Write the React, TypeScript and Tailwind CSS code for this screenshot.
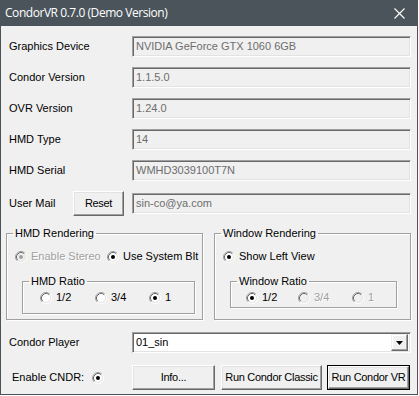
const ui = "font-['Liberation_Sans',Arial,sans-serif] text-[11px] leading-[13px] text-black";
const etched = "border border-[#a0a0a0] shadow-[1px_1px_0_#fff,inset_1px_1px_0_#fff]";

function Radio({ checked, disabled }: { checked?: boolean; disabled?: boolean }) {
  return (
    <svg width="12" height="12" viewBox="0 0 12 12" className="shrink-0">
      <circle cx="6" cy="6" r="4.5" fill={disabled ? "#f0f0f0" : "#ffffff"} />
      <path d="M2.11 9.89 A5.5 5.5 0 0 1 9.89 2.11" fill="none" stroke="#a0a0a0" />
      <path d="M9.89 2.11 A5.5 5.5 0 0 1 2.11 9.89" fill="none" stroke="#ffffff" />
      <path d="M2.82 9.18 A4.5 4.5 0 0 1 9.18 2.82" fill="none" stroke="#696969" />
      <path d="M9.18 2.82 A4.5 4.5 0 0 1 2.82 9.18" fill="none" stroke="#e3e3e3" />
      {checked && <circle cx="6" cy="6" r="2" fill={disabled ? "#a0a0a0" : "#000000"} />}
    </svg>
  );
}

function Option({ label, checked, disabled, className = "" }: { label: string; checked?: boolean; disabled?: boolean; className?: string }) {
  return (
    <div className={`flex items-center gap-[4px] ${className}`}>
      <Radio checked={checked} disabled={disabled} />
      <span className={disabled ? "text-[#a0a0a0] [text-shadow:1px_1px_0_#fff]" : ""}>{label}</span>
    </div>
  );
}

function Field({ value }: { value: string }) {
  return (
    <div className="flex-1 h-[21px] flex items-center px-[3px] bg-[#f0f0f0] text-[#6d6d6d] border border-t-[#a0a0a0] border-l-[#a0a0a0] border-r-white border-b-white shadow-[inset_1px_1px_0_#696969,inset_-1px_-1px_0_#e3e3e3]">
      {value}
    </div>
  );
}

function Button({ label, w, isDefault }: { label: string; w: string; isDefault?: boolean }) {
  const face =
    "h-full w-full flex items-center justify-center whitespace-nowrap tracking-[-0.3px] bg-[#f0f0f0] border border-t-white border-l-white border-r-[#696969] border-b-[#696969] shadow-[inset_-1px_-1px_0_#a0a0a0,inset_1px_1px_0_#e3e3e3]";
  return (
    <div className={`${w} h-[25px] shrink-0 ${isDefault ? "border border-black" : ""}`}>
      <div className={face}>{label}</div>
    </div>
  );
}

function Row({ label, value }: { label: string; value: string }) {
  return (
    <div className="flex items-center mb-[10px]">
      <div className="w-[124px] pl-[1px]">{label}</div>
      <Field value={value} />
    </div>
  );
}

export default function App() {
  return (
    <div className="w-[419px] h-[396px] bg-white">
      <div className={`w-[418px] h-[395px] flex flex-col bg-[#f0f0f0] border-x border-b border-[#4a545a] ${ui}`}>
        <div className="h-[26px] shrink-0 -mx-px bg-[#4a545a] flex items-center justify-between pl-[5px] pr-[13px]">
          <span className="font-['Open_Sans',sans-serif] text-[12px] leading-[16px] text-white tracking-[-0.45px]">
            CondorVR 0.7.0 (Demo Version)
          </span>
          <svg width="11" height="11" viewBox="0 0 11 11">
            <path d="M0.5 0.5 L10.5 10.5 M10.5 0.5 L0.5 10.5" stroke="#ffffff" strokeWidth="1.1" />
          </svg>
        </div>

        <div className="pl-[7px] pr-[6px] pt-[10px]">
          <Row label="Graphics Device" value="NVIDIA GeForce GTX 1060 6GB" />
          <Row label="Condor Version" value="1.1.5.0" />
          <Row label="OVR Version" value="1.24.0" />
          <Row label="HMD Type" value="14" />
          <Row label="HMD Serial" value="WMHD3039100T7N" />

          <div className="flex items-center mt-[1px]">
            <div className="w-[65px] pl-[1px]">User Mail</div>
            <Button label="Reset" w="w-[51px]" />
            <div className="w-[8px]" />
            <Field value="sin-co@ya.com" />
          </div>

          <div className="flex gap-[11px] mt-[11px] -ml-[2px]">
            <fieldset className={`w-[197px] h-[93px] ${etched}`}>
              <legend className="ml-[6px] px-[2px]">HMD Rendering</legend>
              <div className="pl-[8px]">
                <div className="flex items-center mt-[10px]">
                  <Option label="Enable Stereo" checked disabled className="w-[92px]" />
                  <Option label="Use System Blt" checked />
                </div>
                <fieldset className={`mt-[12px] ml-[7px] w-[173px] h-[39px] ${etched}`}>
                  <legend className="ml-[6px] px-[2px]">HMD Ratio</legend>
                  <div className="flex items-center mt-[3px] pl-[17px]">
                    <Option label="1/2" className="w-[55px]" />
                    <Option label="3/4" className="w-[54px]" />
                    <Option label="1" checked />
                  </div>
                </fieldset>
              </div>
            </fieldset>

            <fieldset className={`w-[197px] h-[93px] ${etched}`}>
              <legend className="ml-[6px] px-[2px]">Window Rendering</legend>
              <div className="pl-[8px]">
                <div className="flex items-center mt-[10px]">
                  <Option label="Show Left View" checked />
                </div>
                <fieldset className={`mt-[12px] ml-[7px] w-[167px] h-[33px] ${etched}`}>
                  <legend className="ml-[6px] px-[2px]">Window Ratio</legend>
                  <div className="flex items-center mt-[3px] pl-[15px]">
                    <Option label="1/2" checked className="w-[52px]" />
                    <Option label="3/4" disabled className="w-[54px]" />
                    <Option label="1" disabled />
                  </div>
                </fieldset>
              </div>
            </fieldset>
          </div>

          <div className="flex items-center mt-[12px]">
            <div className="w-[124px] pl-[1px]">Condor Player</div>
            <div className="flex-1 h-[21px] flex items-center justify-between pl-[3px] pr-[2px] bg-white border border-t-[#a0a0a0] border-l-[#a0a0a0] border-r-white border-b-white shadow-[inset_1px_1px_0_#696969,inset_-1px_-1px_0_#e3e3e3]">
              <span>01_sin</span>
              <div className="w-[17px] h-[17px] flex items-center justify-center bg-[#f0f0f0] border border-t-[#f0f0f0] border-l-[#f0f0f0] border-r-[#696969] border-b-[#696969] shadow-[inset_-1px_-1px_0_#a0a0a0,inset_1px_1px_0_#fff]">
                <svg width="7" height="4" viewBox="0 0 7 4">
                  <path d="M0 0 H7 L3.5 4 Z" fill="#000" />
                </svg>
              </div>
            </div>
          </div>

          <div className="flex items-center mt-[12px]">
            <div className="w-[124px] pl-[4px] flex items-center">
              <span className="w-[80px]">Enable CNDR:</span>
              <Radio checked />
            </div>
            <Button label="Info..." w="w-[83px]" />
            <div className="w-[6px]" />
            <Button label="Run Condor Classic" w="w-[101px]" />
            <div className="w-[5px]" />
            <Button label="Run Condor VR" w="w-[83px]" isDefault />
          </div>
        </div>
      </div>
    </div>
  );
}
